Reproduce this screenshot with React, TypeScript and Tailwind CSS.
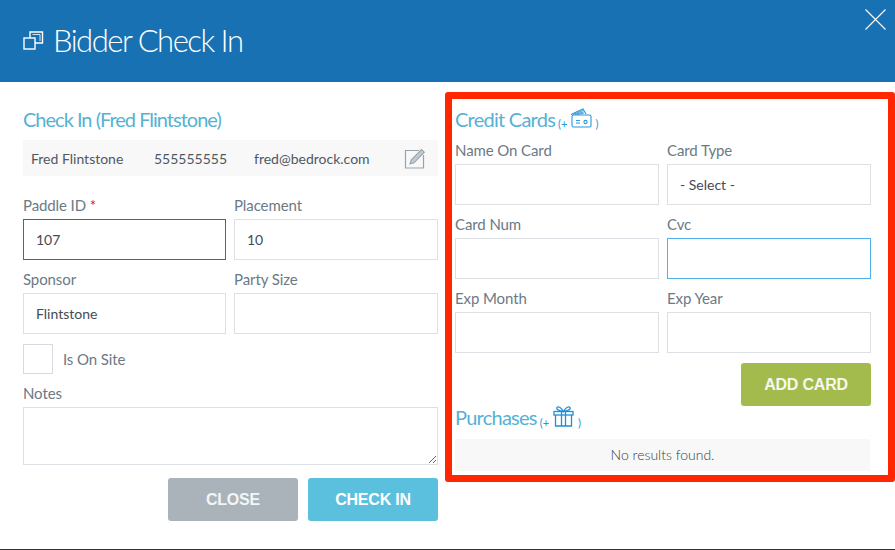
const inputClass =
    "block h-[41px] w-full border border-[#dcdfe3] bg-white pl-3 text-[14px] text-[#444b54] outline-none";

function Label({ children }: { children: React.ReactNode }) {
    return <label className="block h-[27px] pt-[2px] text-[15px] leading-[22px] tracking-[-0.1px] text-[#6b7a85]">{children}</label>;
}

function Field({
    label,
    value,
    className,
    required,
}: {
    label: string;
    value?: string;
    className?: string;
    required?: boolean;
}) {
    return (
        <div className="min-w-0">
            <Label>
                {label}
                {required ? <span className="text-[#c2185b]"> *</span> : null}
            </Label>
            <input defaultValue={value} className={className ?? inputClass} />
        </div>
    );
}

function WindowsIcon() {
    return (
        <svg width="21" height="20" viewBox="0 0 21 20" fill="none" stroke="white" strokeWidth="1.4" aria-hidden="true">
            <rect x="1" y="8" width="11" height="11" />
            <path d="M7 8V2H19.5V13H12" />
            <path d="M9.5 4.5H17V11" strokeWidth="0.8" />
        </svg>
    );
}

function EditIcon() {
    return (
        <svg width="22" height="21" viewBox="0 0 22 21" fill="none" stroke="#98a4ab" aria-hidden="true">
            <path d="M15 2.5H1.5V20H19.5V7" strokeWidth="1.2" />
            <path d="M6 16L7.2 12L17.5 1.5L20.3 4.2L10 14.8L6 16Z" fill="#c3cbd0" strokeWidth="1.1" />
        </svg>
    );
}

function CardsIcon() {
    return (
        <svg width="22" height="20" viewBox="0 0 22 20" fill="none" stroke="#2b96d9" strokeWidth="1.1" aria-hidden="true">
            <path d="M1 6.5L13 1L16 6" />
            <path d="M3 6.5L13 2.5M5 6.5L13.5 3.8M7 6.5L14 5" strokeWidth="0.9" />
            <rect x="2" y="7" width="19" height="12" rx="1.5" />
            <path d="M6 12.5H10M6 15H10" />
            <circle cx="15.5" cy="14" r="1.6" />
        </svg>
    );
}

function GiftIcon() {
    return (
        <svg width="21" height="21" viewBox="0 0 21 21" fill="none" stroke="#1f8fd6" strokeWidth="1.3" aria-hidden="true">
            <path d="M10.5 5.5C8 1 5 0 4 1.5C3 3 5.5 5 10.5 5.5C15.5 5 18 3 17 1.5C16 0 13 1 10.5 5.5Z" />
            <rect x="1" y="5.5" width="19" height="3.5" />
            <path d="M2.5 9V20H18.5V9" />
            <path d="M8.5 5.5V20M12.5 5.5V20" />
        </svg>
    );
}

export default function App() {
    return (
        <div className="flex h-[550px] w-[895px] flex-col overflow-hidden border-b border-[#333] bg-white font-['Lato',sans-serif]">
            <header className="relative flex h-[82px] shrink-0 items-center gap-[9px] bg-[#1771b3] pb-[2px] pl-[23px] text-white">
                <WindowsIcon />
                <h1 className="text-[31px] font-light tracking-[-1.5px]">Bidder Check In</h1>
                <svg
                    className="absolute right-[9px] top-[9px]"
                    width="21"
                    height="21"
                    viewBox="0 0 21 21"
                    stroke="white"
                    strokeWidth="1.1"
                    aria-hidden="true"
                >
                    <path d="M0.5 0.5L20.5 20.5M20.5 0.5L0.5 20.5" />
                </svg>
            </header>

            <div className="flex min-h-0 flex-1">
                <section className="w-[445px] shrink-0 pl-[23px] pr-[7px]">
                    <h2 className="mt-[23px] h-[35px] text-[20px] leading-[28px] tracking-[-1px] text-[#55b2d3]">
                        Check In (Fred Flintstone)
                    </h2>
                    <div className="flex h-[36px] items-center bg-[#f8f8f8] pl-2 pr-3 text-[14px] text-[#4f5962]">
                        <span className="w-[123px]">Fred Flintstone</span>
                        <span className="w-[100px]">555555555</span>
                        <span>fred@bedrock.com</span>
                        <span className="ml-auto flex">
                            <EditIcon />
                        </span>
                    </div>

                    <div className="mt-[16px] grid grid-cols-[203px_204px] gap-x-2 gap-y-[6px]">
                        <Field
                            label="Paddle ID"
                            required
                            value="107"
                            className="block h-[41px] w-full border border-[#5d6468] bg-white pl-3 text-[14px] text-[#444b54] outline-none"
                        />
                        <Field label="Placement" value="10" />
                        <Field label="Sponsor" value="Flintstone" />
                        <Field label="Party Size" />
                    </div>

                    <div className="mt-[10px] flex items-center gap-[10px]">
                        <span className="h-[30px] w-[30px] border border-[#d5dbe0]" />
                        <span className="text-[15px] tracking-[-0.1px] text-[#6b7a85]">Is On Site</span>
                    </div>

                    <div className="mt-[6px]">
                        <Label>Notes</Label>
                        <textarea className="block h-[58px] w-full border border-[#dcdfe3] bg-white outline-none" />
                    </div>

                    <div className="mt-[13px] flex justify-end gap-[10px]">
                        <button
                            type="button"
                            className="h-[43px] w-[130px] rounded-[3px] bg-[#a9b3b9] font-['Liberation_Sans',sans-serif] text-[16px] font-bold tracking-[-0.2px] text-[#f3f5f6]"
                        >
                            CLOSE
                        </button>
                        <button
                            type="button"
                            className="h-[43px] w-[130px] rounded-[3px] bg-[#5bc0de] font-['Liberation_Sans',sans-serif] text-[16px] font-bold tracking-[-0.2px] text-white"
                        >
                            CHECK IN
                        </button>
                    </div>
                </section>

                <section className="mt-[10px] h-[390px] w-[450px] shrink-0 rounded-[3px] border-[7px] border-[#ff2600] pl-[3px] pr-[17px]">
                    <div className="flex h-[29px] items-start pt-[6px]">
                        <h2 className="text-[20px] leading-[28px] tracking-[-0.75px] text-[#55b2d3]">Credit Cards</h2>
                        <span className="ml-[3px] mt-[10px] text-[11px] leading-[18px] text-[#2b96d9]">(+</span>
                        <span className="ml-[3px] mt-[3px] flex">
                            <CardsIcon />
                        </span>
                        <span className="ml-[3px] mt-[10px] text-[11px] leading-[18px] text-[#2b96d9]">)</span>
                    </div>

                    <div className="grid grid-cols-[204px_204px] gap-x-2 gap-y-[6px] pt-[9px]">
                        <Field label="Name On Card" />
                        <div className="min-w-0">
                            <Label>Card Type</Label>
                            <select className="block h-[41px] w-full appearance-none border border-[#dcdfe3] bg-white pl-3 text-[14px] text-[#444b54] outline-none">
                                <option>- Select -</option>
                            </select>
                        </div>
                        <Field label="Card Num" />
                        <Field
                            label="Cvc"
                            className="block h-[41px] w-full border border-[#4fb2ec] bg-white pl-3 text-[14px] text-[#444b54] outline-none"
                        />
                        <Field label="Exp Month" />
                        <Field label="Exp Year" />
                    </div>

                    <div className="mt-[10px] flex justify-end">
                        <button
                            type="button"
                            className="h-[43px] w-[130px] rounded-[3px] bg-[#a2bb4c] font-['Liberation_Sans',sans-serif] text-[16px] font-bold tracking-[-0.2px] text-[#f6f8ee]"
                        >
                            ADD CARD
                        </button>
                    </div>

                    <div className="flex h-[33px] items-start">
                        <h2 className="-mt-[3px] text-[20px] leading-[28px] tracking-[-0.75px] text-[#55b2d3]">Purchases</h2>
                        <span className="ml-[3px] mt-[8px] text-[11px] leading-[18px] text-[#2b96d9]">(+</span>
                        <span className="ml-[4px] flex">
                            <GiftIcon />
                        </span>
                        <span className="ml-[4px] mt-[8px] text-[11px] leading-[18px] text-[#2b96d9]">)</span>
                    </div>

                    <div className="flex h-[32px] w-[415px] items-center justify-center bg-[#f8f8f8] pb-[2px] text-[14px] font-light text-[#353d47]">
                        No results found.
                    </div>
                </section>
            </div>
        </div>
    );
}
